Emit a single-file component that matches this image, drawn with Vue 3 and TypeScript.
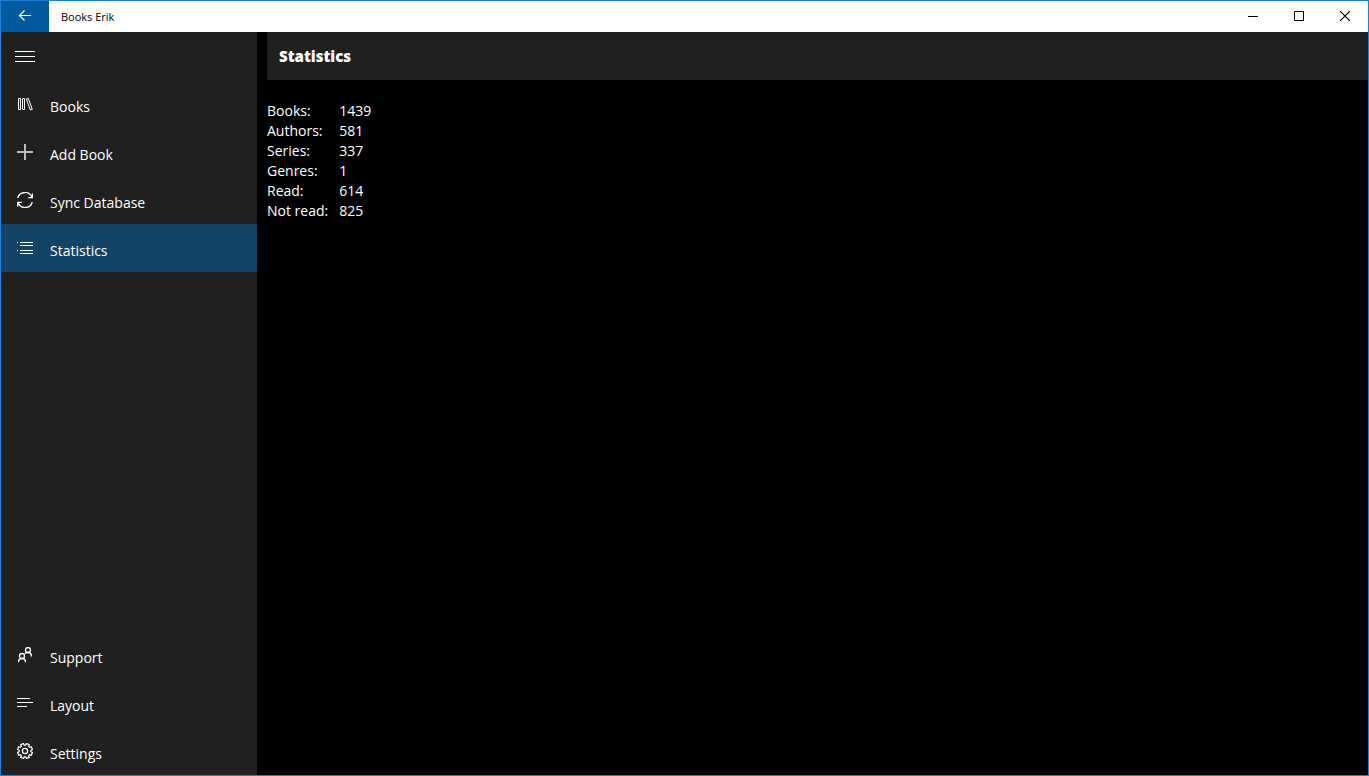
<script setup lang="ts">
import { ref } from 'vue'

interface NavItem {
  id: string
  label: string
}

const mainItems: NavItem[] = [
  { id: 'books', label: 'Books' },
  { id: 'add', label: 'Add Book' },
  { id: 'sync', label: 'Sync Database' },
  { id: 'statistics', label: 'Statistics' },
]

const footerItems: NavItem[] = [
  { id: 'support', label: 'Support' },
  { id: 'layout', label: 'Layout' },
  { id: 'settings', label: 'Settings' },
]

const groups = [
  { id: 'main', items: mainItems },
  { id: 'footer', items: footerItems },
]

const stats = [
  { label: 'Books:', value: 1439 },
  { label: 'Authors:', value: 581 },
  { label: 'Series:', value: 337 },
  { label: 'Genres:', value: 1 },
  { label: 'Read:', value: 614 },
  { label: 'Not read:', value: 825 },
]

const active = ref('statistics')

function gearPath(): string {
  const teeth = 8
  const points: string[] = []
  for (let i = 0; i < teeth; i++) {
    const base = ((i + 0.5) * 2 * Math.PI) / teeth
    const corners: [number, number][] = [
      [-0.27, 5.9],
      [-0.2, 7.6],
      [0.2, 7.6],
      [0.27, 5.9],
    ]
    for (const [offset, radius] of corners) {
      const x = 8 + radius * Math.sin(base + offset)
      const y = 8 - radius * Math.cos(base + offset)
      points.push(`${x.toFixed(2)} ${y.toFixed(2)}`)
    }
  }
  return `M${points.join('L')}Z`
}

const gear = gearPath()
</script>

<template>
  <div class="window">
    <header class="titlebar">
      <button class="back" type="button" aria-label="Back">
        <svg width="14" height="12" viewBox="0 0 14 12">
          <path stroke-width="1.2" d="M13 5.500H1.500M6.500 .5l-5 5 5 5" />
        </svg>
      </button>
      <span class="app-name">Books Erik</span>
      <button class="caption" type="button" aria-label="Minimize">
        <svg width="10" height="10" viewBox="0 0 10 10"><path d="M0 5.5h10" /></svg>
      </button>
      <button class="caption" type="button" aria-label="Maximize">
        <svg width="10" height="10" viewBox="0 0 10 10"><path d="M.5.5h9v9h-9z" /></svg>
      </button>
      <button class="caption" type="button" aria-label="Close">
        <svg width="10" height="10" viewBox="0 0 10 10"><path stroke-width="1.2" d="M0 0l10 10M10 0L0 10" /></svg>
      </button>
    </header>

    <div class="body">
      <nav class="sidebar">
        <button class="menu" type="button" aria-label="Menu">
          <svg width="20" height="12" viewBox="0 0 20 12"><path d="M0 1.5h20M0 6.5h20M0 11.5h20" /></svg>
        </button>
        <ul v-for="group in groups" :key="group.id" class="nav-list">
          <li v-for="item in group.items" :key="item.id">
            <button
              class="nav-item"
              :class="{ active: active === item.id }"
              type="button"
              @click="active = item.id"
            >
              <svg width="16" height="16" viewBox="0 0 16 16" aria-hidden="true">
                <path v-if="item.id === 'books'" d="M1.5 2.5h2v11h-2zM5.5 2.5h2v11h-2zM9.3 3l2-.6 4 11-2 .6z" />
                <path v-else-if="item.id === 'add'" class="wide" d="M8 0v16M0 8h16" />
                <path
                  v-else-if="item.id === 'sync'"
                  stroke-width="1.25"
                  d="M.7 6A7.500 7.500 0 0 1 15 5.500M15.400 1.500v4.200h-4.200M15.300 10A7.500 7.500 0 0 1 1 10.500M.6 14.500v-4.200h4.200"
                />
                <path
                  v-else-if="item.id === 'statistics'"
                  d="M0 2.5h1M3 2.5h13M3 5.5h13M0 10.5h1M3 10.5h13M3 13.5h13"
                />
                <g v-else-if="item.id === 'support'" stroke-width="1.3">
                  <circle cx="11" cy="3" r="2.500" />
                  <circle cx="5" cy="9" r="2.500" />
                  <path d="M1.500 15.200c0-2.400 1.400-3.700 3.500-3.700s3.500 1.300 3.500 3.700M7.700 6.600c.8-.8 1.900-1.100 3.300-1.100 2.100 0 3.500 1.500 3.500 4" />
                </g>
                <path v-else-if="item.id === 'layout'" d="M0 3.5h13M0 7.5h16M0 11.5h10" />
                <g v-else stroke-width="1.25">
                  <path :d="gear" />
                  <circle cx="8" cy="8" r="2.6" />
                </g>
              </svg>
              <span class="nav-label">{{ item.label }}</span>
            </button>
          </li>
        </ul>
      </nav>

      <main class="content">
        <h1 class="heading">Statistics</h1>
        <table class="stats">
          <tbody>
            <tr v-for="row in stats" :key="row.label">
              <th scope="row">{{ row.label }}</th>
              <td>{{ row.value }}</td>
            </tr>
          </tbody>
        </table>
      </main>
    </div>
  </div>
</template>

<style>
body {
  margin: 0;
  background: #000;
}
</style>

<style scoped>
.window {
  display: flex;
  flex-direction: column;
  box-sizing: border-box;
  min-height: 100vh;
  border: 1px solid #1c80d4;
  background: #000;
  color: #fff;
  font-family: "Open Sans", "Noto Sans", sans-serif;
  font-size: 14px;
  line-height: 20px;
}

button {
  margin: 0;
  padding: 0;
  border: 0;
  background: none;
  color: inherit;
  font: inherit;
}

svg {
  display: block;
  flex: none;
  fill: none;
  stroke: currentColor;
}

.wide {
  stroke-width: 2;
  stroke: #bcbcbc;
}

.titlebar {
  display: flex;
  height: 31px;
  background: #fff;
  color: #000;
}

.back,
.caption {
  display: flex;
  align-items: center;
  justify-content: center;
  padding-bottom: 1px;
}

.back {
  width: 48px;
  background: #005a9e;
  color: #fff;
}

.caption {
  width: 46px;
}

.app-name {
  flex: 1;
  padding-left: 12px;
  font-size: 11px;
  line-height: 31px;
}

.body {
  display: flex;
  flex: 1;
}

.sidebar {
  display: flex;
  flex-direction: column;
  flex: none;
  width: 256px;
  background: #202020;
}

.menu {
  display: flex;
  align-items: center;
  justify-content: center;
  width: 48px;
  height: 48px;
}

.nav-list {
  margin: 0;
  padding: 0;
  list-style: none;
}

.nav-list:last-child {
  margin-top: auto;
}

.nav-item {
  display: flex;
  align-items: center;
  gap: 17px;
  width: 100%;
  height: 48px;
  padding-left: 16px;
  text-align: left;
}

.nav-item.active {
  background: #144368;
}

.nav-label {
  padding-top: 6px;
}

.content {
  flex: 1;
  padding-left: 10px;
}

.heading {
  margin: 0;
  padding-left: 12px;
  background: #202020;
  font-size: 15px;
  font-weight: 800;
  line-height: 48px;
}

.stats {
  margin-top: 21px;
  border-collapse: collapse;
}

.stats th,
.stats td {
  padding: 0;
  font-weight: 400;
  text-align: left;
}

.stats th {
  padding-right: 11px;
}
</style>
